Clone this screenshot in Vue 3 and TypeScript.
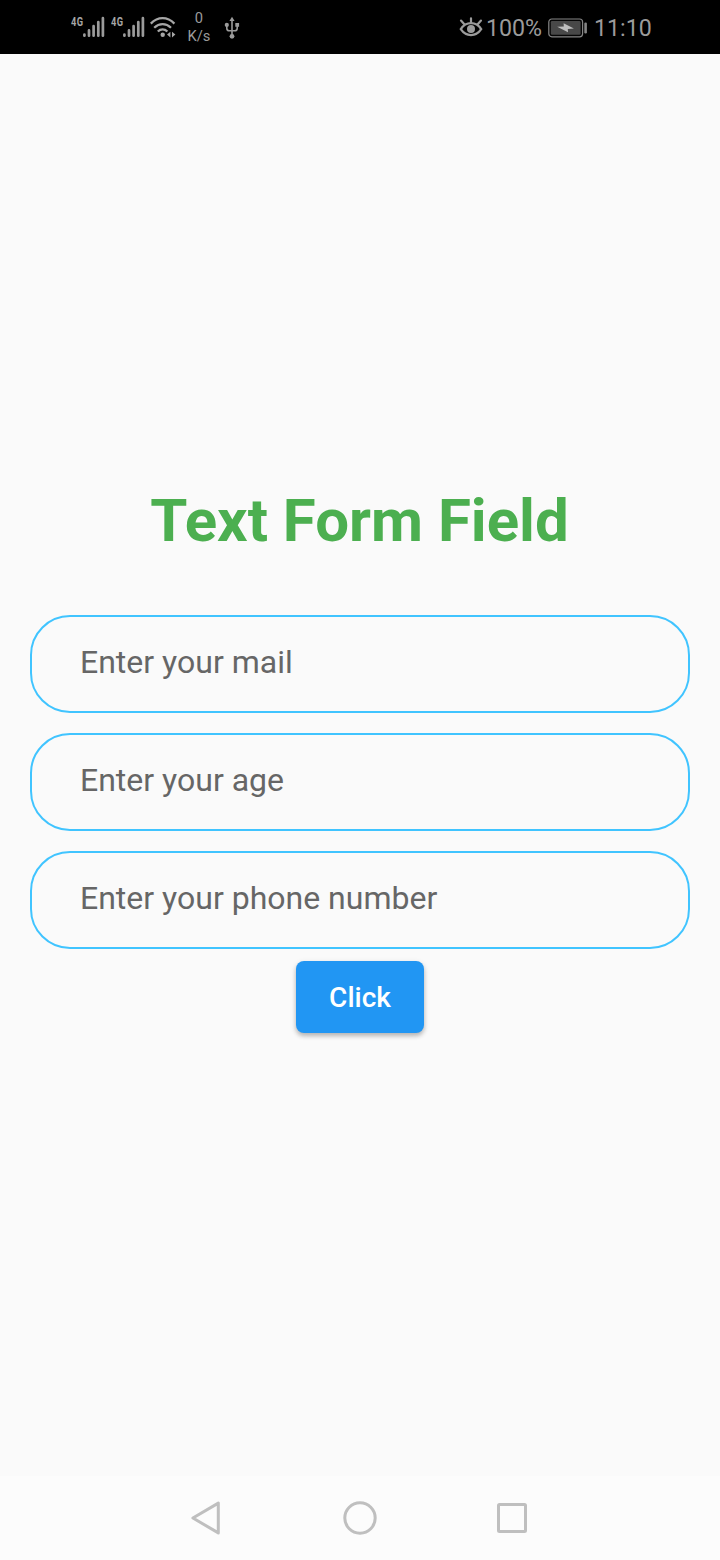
<script setup lang="ts">
import { reactive } from 'vue'

interface Field {
  key: 'mail' | 'age' | 'phone'
  hint: string
}

const fields: Field[] = [
  { key: 'mail', hint: 'Enter your mail' },
  { key: 'age', hint: 'Enter your age' },
  { key: 'phone', hint: 'Enter your phone number' },
]
const values = reactive({ mail: '', age: '', phone: '' })
const sims = [1, 2]
</script>

<template>
  <div class="screen">
    <header class="status">
      <div class="left">
        <div v-for="sim in sims" :key="sim" class="sim">
          <span class="net">4G</span>
          <svg class="bars" width="22" height="22" viewBox="0 0 22 22">
            <g stroke="#9b9b9b" stroke-width="2.7" stroke-linecap="round">
              <path d="M1.4 18.6v1.1M6 14.4v5.3M10.6 10.2v9.5M15.3 6v13.7M19.9 2.2v17.5" />
            </g>
          </svg>
        </div>
        <svg class="wifi" width="28" height="24" viewBox="0 0 28 24">
          <g fill="none" stroke="#a6a6a6" stroke-width="2.3">
            <path d="M.8 8.6C7.9 1.4 17.3 1.4 24.4 8.6" />
            <path d="M4.2 12.7c5-4.9 11.8-4.9 16.8 0" />
            <path d="M7.8 16.5c2.9-2.8 6.7-2.8 9.6 0" />
          </g>
          <circle cx="12.7" cy="19.8" r="2.2" fill="#a6a6a6" />
          <path d="M20.4 16.8v5.6l-3.4-2.8zM22 16.8v5.6l3.4-2.8z" fill="#a6a6a6" />
        </svg>
        <div class="speed"><span>0</span><span>K/s</span></div>
        <svg class="usb" width="16" height="24" viewBox="0 0 16 24">
          <g fill="none" stroke="#9b9b9b" stroke-width="1.6">
            <path d="M8 3v17M2.8 9v3.2c0 1.7 1 2.6 2.5 2.6h5.4c1.5 0 2.5-.9 2.5-2.6V9" />
          </g>
          <path d="M8 .8l2.6 4.2H5.4zM11.3 7h3.8v3.8h-3.8z" fill="#9b9b9b" />
          <circle cx="2.8" cy="8.9" r="2.1" fill="#9b9b9b" />
          <circle cx="8" cy="20.3" r="2.4" fill="#9b9b9b" />
        </svg>
      </div>
      <div class="right">
        <svg class="eye" width="24" height="22" viewBox="0 0 24 22">
          <g fill="none" stroke="#9b9b9b" stroke-width="2.2" stroke-linecap="round">
            <path d="M1.8 13.1C7.1 5.2 16.9 5.2 22.2 13.1 16.9 21 7.1 21 1.8 13.1z" />
            <path d="M12 6V2.3M5.3 8.2L2 4.6M18.7 8.2L22 4.6" />
          </g>
          <circle cx="12" cy="13" r="4" fill="#9b9b9b" />
        </svg>
        <span class="percent">100%</span>
        <svg class="battery" width="40" height="20" viewBox="0 0 40 20">
          <rect x=".8" y="1" width="33.8" height="17.8" rx="3" fill="#050505" stroke="#858585" stroke-width="1.2" />
          <rect x="2.8" y="3" width="29.8" height="13.8" rx="1.2" fill="#484848" />
          <rect x="36.3" y="4.5" width="2.6" height="11" rx="1.2" fill="#858585" />
          <path d="M9.2 8.8l6.6-.3-.2-3.3 10.3 5.2-6.1.5.2 3.4z" fill="#bdbdbd" />
        </svg>
        <span class="clock">11:10</span>
      </div>
    </header>

    <main class="content">
      <h1>Text Form Field</h1>
      <form @submit.prevent>
        <input v-for="field in fields" :key="field.key" v-model="values[field.key]" :placeholder="field.hint" type="text" />
        <button type="submit">Click</button>
      </form>
    </main>

    <nav class="nav">
      <svg width="34" height="36" viewBox="0 0 34 36"><path d="M30.3 3.1v29.8L4.9 18z" /></svg>
      <svg width="36" height="36" viewBox="0 0 36 36"><circle cx="19" cy="18" r="15.2" /></svg>
      <svg width="34" height="36" viewBox="0 0 34 36"><rect x="3.5" y="4.5" width="27" height="27" rx="1" /></svg>
    </nav>
  </div>
</template>

<style>
body {
  margin: 0;
}
</style>

<style scoped>
.screen {
  display: flex;
  flex-direction: column;
  width: 720px;
  height: 1560px;
  background: #fafafa;
  font-family: Roboto, "Liberation Sans", sans-serif;
}

.status {
  display: flex;
  justify-content: space-between;
  box-sizing: border-box;
  flex: none;
  height: 54px;
  padding: 0 68px 0 71px;
  background: #000;
  color: #9b9b9b;
}

.left,
.right {
  display: flex;
  align-items: flex-start;
}

.sim {
  display: flex;
  width: 40px;
  padding-top: 16px;
}

.net {
  width: 12px;
  color: #a6a6a6;
  font: 700 12.5px/12px Roboto, sans-serif;
  letter-spacing: 0.6px;
  transform: scaleX(0.74);
  transform-origin: left;
}

.bars {
  flex: none;
}

.wifi {
  margin-top: 15px;
  margin-left: -1px;
}

.speed {
  display: flex;
  flex-direction: column;
  align-items: center;
  width: 26px;
  margin: 9px -1px 0 8px;
  font-size: 14.7px;
  line-height: 18px;
}

.usb {
  margin: 16px 0 0 13px;
}

.eye {
  margin-top: 16px;
}

.percent,
.clock {
  font-size: 23.2px;
  line-height: 28px;
  margin-top: 14px;
}

.percent {
  width: 56px;
  margin-left: 3px;
}

.battery {
  margin: 18px 0 0 6px;
}

.clock {
  width: 58px;
  margin-left: 6px;
}

.content {
  flex: 1;
  padding: 432px 30px 0;
}

h1 {
  margin: 0 1px 59px 0;
  color: #4caf50;
  font-size: 60px;
  font-weight: 700;
  line-height: 70px;
  text-align: center;
}

form {
  display: flex;
  flex-direction: column;
  gap: 20px;
}

input {
  box-sizing: border-box;
  width: 100%;
  height: 98px;
  padding: 0 48px 4px;
  border: 2px solid #40c4ff;
  border-radius: 40px;
  outline: none;
  background: transparent;
  color: #212121;
  font: 400 32px/38px Roboto, sans-serif;
}

input::placeholder {
  color: #666;
  opacity: 1;
}

button {
  align-self: center;
  width: 128px;
  height: 72px;
  margin-top: -8px;
  padding: 0;
  border: 0;
  border-radius: 8px;
  background: #2196f3;
  box-shadow: 0 3px 4px rgba(0, 0, 0, 0.2), 0 2px 6px rgba(0, 0, 0, 0.12);
  color: #fff;
  font: 500 28px/33px Roboto, sans-serif;
}

.nav {
  display: flex;
  align-items: center;
  justify-content: space-between;
  flex: none;
  height: 84px;
  padding: 0 191px 0 188px;
  background: #fcfcfc;
}

.nav path,
.nav circle,
.nav rect {
  fill: none;
  stroke: #bfbfbf;
  stroke-width: 3;
  stroke-linejoin: round;
}
</style>
